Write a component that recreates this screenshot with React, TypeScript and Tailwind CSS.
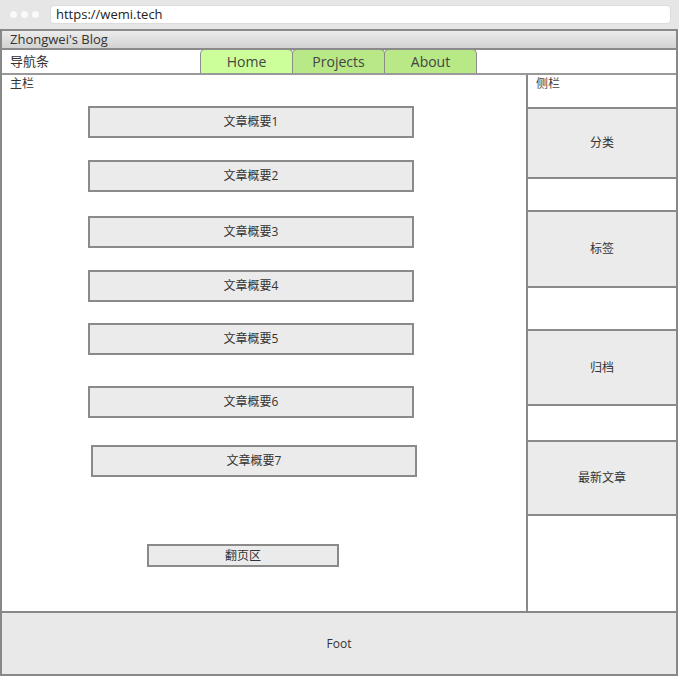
const font = { fontFamily: '"Open Sans", "Noto Sans CJK SC", sans-serif' };

const articles = [
  { label: '文章概要1', mt: 'mt-[14px]', ml: 'ml-[86px]' },
  { label: '文章概要2', mt: 'mt-[22px]', ml: 'ml-[86px]' },
  { label: '文章概要3', mt: 'mt-[24px]', ml: 'ml-[86px]' },
  { label: '文章概要4', mt: 'mt-[22px]', ml: 'ml-[86px]' },
  { label: '文章概要5', mt: 'mt-[21px]', ml: 'ml-[86px]' },
  { label: '文章概要6', mt: 'mt-[31px]', ml: 'ml-[86px]' },
  { label: '文章概要7', mt: 'mt-[27px]', ml: 'ml-[89px]' },
];

const sideBoxes = [
  { label: '分类', mt: 'mt-[15px]', h: 'h-[72px]' },
  { label: '标签', mt: 'mt-[31px]', h: 'h-[78px]' },
  { label: '归档', mt: 'mt-[41px]', h: 'h-[77px]' },
  { label: '最新文章', mt: 'mt-[34px]', h: 'h-[76px]' },
];

const tabs = [
  { label: 'Home', bg: 'bg-[#ccff99]' },
  { label: 'Projects', bg: 'bg-[#b8e986]' },
  { label: 'About', bg: 'bg-[#b8e986]' },
];

export default function App() {
  return (
    <div className="w-[679px] h-[677px] bg-white overflow-hidden text-[#333]" style={font}>
      {/* browser chrome */}
      <div className="h-[29px] bg-[#e6e6e6] flex items-center pl-[10px] pr-[8px]">
        <div className="flex gap-[4px]">
          <span className="w-[7px] h-[7px] rounded-full bg-[#fafafa]" />
          <span className="w-[7px] h-[7px] rounded-full bg-[#fafafa]" />
          <span className="w-[7px] h-[7px] rounded-full bg-[#fafafa]" />
        </div>
        <div className="ml-[11px] flex-1 h-[19px] bg-white border border-[#dcdcdc] rounded-[4px] flex items-center pl-[5px] text-[13px] text-[#222]">
          https://wemi.tech
        </div>
      </div>

      <div className="w-[678px] border-x-2 border-[#888]">
        {/* title bar */}
        <div className="h-[21px] border-y-2 border-[#8a8a8a] bg-gradient-to-b from-[#ececec] to-[#d2d2d2] flex items-center pl-[8px] text-[13px] text-[#333]">
          Zhongwei's Blog
        </div>

        {/* nav */}
        <div className="h-[25px] border-b-2 border-[#999] flex items-end">
          <div className="w-[198px] self-center pl-[8px] text-[13px]">导航条</div>
          {tabs.map((t) => (
            <div
              key={t.label}
              className={`w-[93px] h-[24px] -mr-[1px] ${t.bg} border border-b-0 border-[#8c8c8c] rounded-t-[5px] flex items-center justify-center text-[14px] text-[#444]`}
            >
              {t.label}
            </div>
          ))}
        </div>

        {/* body */}
        <div className="h-[538px] flex border-b-2 border-[#888]">
          <div className="w-[526px] border-r-2 border-[#888] flex flex-col items-start">
            <div className="pl-[8px] text-[12px] leading-[16px] mt-[1px]">主栏</div>
            {articles.map((a) => (
              <div
                key={a.label}
                className={`${a.mt} ${a.ml} w-[326px] h-[32px] bg-[#ebebeb] border-2 border-[#8a8a8a] flex items-center justify-center text-[12px] text-[#333]`}
              >
                {a.label}
              </div>
            ))}
            <div className="mt-[67px] ml-[145px] w-[192px] h-[23px] bg-[#ebebeb] border-2 border-[#8a8a8a] flex items-center justify-center text-[12px]">
              翻页区
            </div>
          </div>

          <div className="flex-1 flex flex-col">
            <div className="pl-[8px] text-[12px] leading-[16px] mt-[1px] text-[#444]">侧栏</div>
            {sideBoxes.map((b) => (
              <div
                key={b.label}
                className={`${b.mt} ${b.h} bg-[#ebebeb] border-y-2 border-[#8a8a8a] flex items-center justify-center text-[12px]`}
              >
                {b.label}
              </div>
            ))}
          </div>
        </div>

        {/* footer */}
        <div className="h-[63px] bg-[#e9e9e9] border-b-2 border-[#888] flex items-center justify-center text-[12px]">
          Foot
        </div>
      </div>
    </div>
  );
}
